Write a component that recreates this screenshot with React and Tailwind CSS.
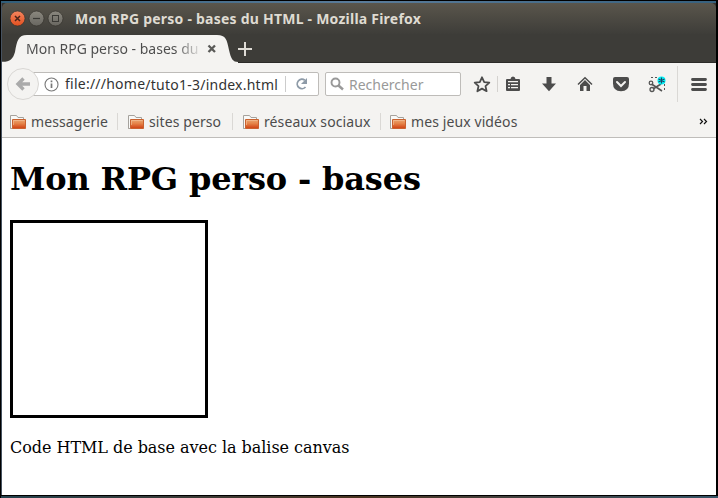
import React from "react";

function Folder() {
  return (
    <svg width="17" height="16" viewBox="0 0 17 16" className="mt-px shrink-0">
      <defs>
        <linearGradient id="folder" x1="0" y1="0" x2="0" y2="1">
          <stop offset="0" stopColor="#eba873" />
          <stop offset="0.45" stopColor="#e58348" />
          <stop offset="1" stopColor="#cf3f12" />
        </linearGradient>
      </defs>
      <path d="M.5 14.500V1.500h6l1.500 2h5.500v3" fill="#f8f8f7" stroke="#a5a29d" />
      <path d="M.5 5v9.500h2" fill="none" stroke="#a5a29d" />
      <path d="M2.500 14.500v-9h13v9z" fill="url(#folder)" stroke="#c9622f" />
      <path d="M3.500 11V6.500h11" fill="none" stroke="#f3c39d" strokeOpacity=".6" />
    </svg>
  );
}

function Bookmark({ label, width }) {
  return (
    <div className={"flex items-center " + width}>
      <Folder />
      <span className="mt-px ml-1 whitespace-nowrap">{label}</span>
    </div>
  );
}

function TitleBar() {
  return (
    <div className="flex h-[31px] shrink-0 items-center rounded-t-[5px] bg-linear-to-b from-[#5a564c] to-[#3e3d39] pl-2">
      <svg width="56" height="18" viewBox="0 0 56 18" className="shrink-0">
        <defs>
          <linearGradient id="closeButton" x1="0" y1="0" x2="0" y2="1">
            <stop offset="0" stopColor="#f58660" />
            <stop offset="1" stopColor="#e2501f" />
          </linearGradient>
          <linearGradient id="grayButton" x1="0" y1="0" x2="0" y2="1">
            <stop offset="0" stopColor="#8b887f" />
            <stop offset="1" stopColor="#686660" />
          </linearGradient>
        </defs>
        <circle cx="7.5" cy="8.5" r="7.5" fill="url(#closeButton)" stroke="#35322d" strokeWidth=".7" />
        <circle cx="26.5" cy="8.5" r="7.5" fill="url(#grayButton)" stroke="#35322d" strokeWidth=".7" />
        <circle cx="45.5" cy="8.5" r="7.5" fill="url(#grayButton)" stroke="#35322d" strokeWidth=".7" />
        <path d="M5 6l5 5M10 6l-5 5" stroke="#4a241a" strokeWidth="1.5" />
        <path d="M23 8.5h7" stroke="#3a3935" strokeWidth="1.2" />
        <rect x="42.5" y="5.5" width="6" height="6" fill="none" stroke="#3a3935" />
      </svg>
      <span className="ml-[9px] whitespace-nowrap text-[14px] leading-5 font-bold tracking-[0.23px] text-[#dfdbd2]">
        Mon RPG perso - bases du HTML - Mozilla Firefox
      </span>
    </div>
  );
}

function Tabs() {
  return (
    <div className="flex h-[29px] shrink-0 border-b border-[#2c2b28] bg-[#3d3c38]">
      <div className="relative h-[29px] w-[236px] shrink-0">
        <svg width="236" height="29" className="absolute inset-0">
          <path d="M0 29v-1.2C8 28 11 25 13 18C15 7 16 1 25 1H215C224 1 225 6 227 16C229 25 231 28 236 28v1z" fill="#f4f3f1" />
        </svg>
        <div className="relative flex h-[28px] items-center pl-6">
          <span className="mt-px w-[174px] bg-linear-to-r from-[#4c4c4c] from-86% to-[#4c4c4c]/10 bg-clip-text text-[14px] leading-5 whitespace-nowrap text-transparent">
            Mon RPG perso - bases du
          </span>
          <svg width="10" height="10" className="mt-px ml-[7px]">
            <path d="M1.500 1.500l6.500 6.500M8 1.500l-6.500 6.500" stroke="#5a5a58" strokeWidth="2.300" />
          </svg>
        </div>
      </div>
      <svg width="16" height="16" className="mt-[8px]">
        <path d="M7 0v14M0 7h14" stroke="#dedbd5" strokeWidth="2" />
      </svg>
    </div>
  );
}

function ToolbarIcons() {
  return (
    <svg width="255" height="40" viewBox="461 64 255 40" className="shrink-0" fill="#4c4c4c">
      <path d="M482 77.3l2.2 4.8 5.1.5-3.8 3.5 1.1 5.1-4.6-2.6-4.6 2.6 1.1-5.1-3.8-3.5 5.1-.5z" fill="none" stroke="#4c4c4c" strokeWidth="1.8" strokeLinejoin="round" />
      <path d="M497.5 76v16" stroke="#d4d2cf" />
      <path d="M507 79h3.500q.3-2.500 2.500-2.500t2.500 2.500h3.500q1 0 1 1v10q0 1-1 1h-12q-1 0-1-1v-10q0-1 1-1z" />
      <path d="M508 81h10v1.300h-10zM508 84h2v1.300h-2zM511 84h7v1.300h-7zM508 87h2v1.300h-2zM511 87h7v1.300h-7z" fill="#f4f3f1" />
      <path d="M546.5 77h5v6.500h4.500l-7 7.800-7-7.800h4.500z" />
      <path d="M578 84.5l7-6.700 7 6.700" fill="none" stroke="#4c4c4c" strokeWidth="1.5" />
      <path d="M580 85l5-5 5 5v6h-3.500v-5h-3v5H580z" />
      <path d="M615 77h12q2 0 2 2v4.500q0 7.500-8 7.800-8-.3-8-7.800V79q0-2 2-2z" />
      <path d="M617 82l4 4 4-4" fill="none" stroke="#f4f3f1" strokeWidth="2" strokeLinecap="round" />
      <path d="M651 77.5h7M664.5 84v6" fill="none" stroke="#555" strokeDasharray="2 2" />
      <path d="M651.500 84l10.500 7M661 84l-8 5" stroke="#555" strokeWidth="1.600" />
      <circle cx="651" cy="83" r="1.800" fill="none" stroke="#555" strokeWidth="1.300" />
      <circle cx="652" cy="89.500" r="2" fill="none" stroke="#555" strokeWidth="1.300" />
      <circle cx="661.500" cy="80.500" r="4" fill="#00f4f8" />
      <path d="M661.500 77.500v6M658.500 79l6 3M664.500 79l-6 3" stroke="#246" strokeWidth="1.200" />
      <path d="M677.5 66v36" stroke="#dad8d5" />
      <path d="M692.500 79.500h13M692.500 84.500h13M692.500 89.500h13" stroke="#4c4c4c" strokeWidth="2.800" strokeLinecap="round" />
    </svg>
  );
}

function NavBar() {
  return (
    <div className="flex h-[42px] items-center text-[14px] leading-5 text-[#333]">
      <div className="z-10 ml-[5px] flex size-8 shrink-0 items-center justify-center rounded-full border border-[#d9d7d4] bg-[#f4f3f1]">
        <svg width="16" height="16">
          <path d="M15 8H3M8.500 2.500L3 8l5.500 5.500" fill="none" stroke="#aaa" strokeWidth="3.400" />
        </svg>
      </div>
      <div className="-ml-[8px] flex h-6 w-[288px] shrink-0 items-center rounded-r-[2px] border border-[#bebcb9] bg-white">
        <svg width="15" height="15" className="ml-[12px] shrink-0">
          <circle cx="7.500" cy="7.500" r="6.500" fill="none" stroke="#777" strokeWidth="1.100" />
          <path d="M7.500 6.500v4.500M7.500 3.500v1.800" stroke="#777" strokeWidth="1.700" />
        </svg>
        <span className="ml-[6px] w-[220px] tracking-[0.24px] whitespace-nowrap">
          file:///home<span className="relative top-px">/tuto1-3/index.html</span>
        </span>
        <span className="h-4 w-px bg-[#ccc]" />
        <svg width="12" height="14" className="ml-[10px]">
          <path d="M9.500 10A4.700 4.700 0 1 1 8.800 3.200" fill="none" stroke="#8e9ba8" strokeWidth="1.800" />
          <path d="M11 1v6H5z" fill="#8e9ba8" />
        </svg>
      </div>
      <div className="ml-[6px] flex h-6 w-[136px] shrink-0 items-center rounded-[2px] border border-[#bebcb9] bg-white text-[#999]">
        <svg width="14" height="14" className="ml-1">
          <circle cx="5.500" cy="5.500" r="4" fill="none" stroke="#999" strokeWidth="1.900" />
          <path d="M8.500 8.500l4.500 4" stroke="#999" strokeWidth="2.400" />
        </svg>
        <span className="mt-px ml-[5px]">Rechercher</span>
      </div>
      <ToolbarIcons />
    </div>
  );
}

function Bookmarks() {
  return (
    <div className="flex h-8 items-center pl-2 text-[14px] leading-5 tracking-[0.1px] text-[#4c4c4c]">
      <Bookmark label="messagerie" width="w-[107px]" />
      <span className="mr-[10px] h-[17px] w-px bg-[#dad8d5]" />
      <Bookmark label="sites perso" width="w-[104px]" />
      <span className="mr-[10px] h-[17px] w-px bg-[#dad8d5]" />
      <Bookmark label="réseaux sociaux" width="w-[137px]" />
      <span className="mr-[9px] h-[17px] w-px bg-[#dad8d5]" />
      <Bookmark label="mes jeux vidéos" width="w-[309px]" />
      <svg width="10" height="8" className="mt-px">
        <path d="M1 1l2.500 2.500L1 6M5 1l2.500 2.500L5 6" fill="none" stroke="#111" strokeWidth="1.200" />
      </svg>
    </div>
  );
}

export default function App() {
  return (
    <div className="h-[498px] w-[718px] overflow-hidden border-t border-l border-black bg-black font-['Noto_Sans',sans-serif]">
      <div className="h-[2px] w-[715px] bg-linear-to-r from-[#315e79] via-[#5a7c9a] to-[#37617e]" />
      <div className="flex h-[492px] w-[715px] flex-col border-l border-[#465260] bg-[#35332f]">
        <TitleBar />
        <Tabs />
        <div className="h-[75px] shrink-0 border-b border-[#bfbdba] bg-[#f4f3f1]">
          <NavBar />
          <Bookmarks />
        </div>
        <main className="flex-1 bg-white pl-2 font-['DejaVu_Serif',serif] text-black">
          <h1 className="pt-[22px] text-[32px] leading-[38px] font-bold tracking-[-0.17px]">Mon RPG perso - bases</h1>
          <div className="mt-[22px] h-[198px] w-[198px] border-3 border-black" />
          <p className="mt-5 text-[16px] leading-[19px] tracking-[-0.04px]">Code HTML de base avec la balise canvas</p>
        </main>
      </div>
      <div className="mt-[1px] h-[2px] bg-linear-to-r from-[#24424e] via-[#4a3420] to-[#345366]" />
    </div>
  );
}
